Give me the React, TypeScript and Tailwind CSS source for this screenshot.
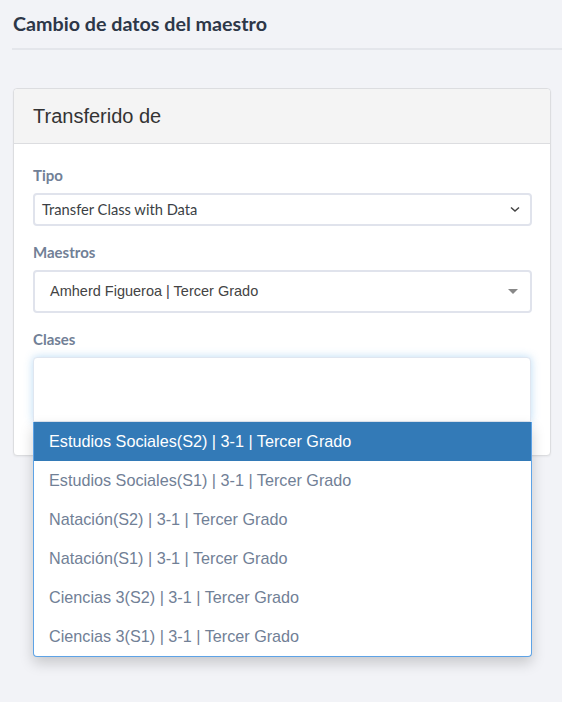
import React from "react";

const options = [
  "Estudios Sociales(S2) | 3-1 | Tercer Grado",
  "Estudios Sociales(S1) | 3-1 | Tercer Grado",
  "Natación(S2) | 3-1 | Tercer Grado",
  "Natación(S1) | 3-1 | Tercer Grado",
  "Ciencias 3(S2) | 3-1 | Tercer Grado",
  "Ciencias 3(S1) | 3-1 | Tercer Grado",
];

export default function App() {
  return (
    <div className="min-h-[702px] w-[562px] bg-[#f2f3f7] font-['Lato',sans-serif] overflow-hidden">
      <div className="pl-[13px] pt-[11px]">
        <h1 className="text-[19.7px] leading-[26px] font-bold text-[#2d3748]">Cambio de datos del maestro</h1>
      </div>
      <div className="ml-[12px] mt-[11px] h-[2px] bg-[#e4e6eb]" />
      <div className="mx-[13px] mt-[38px] w-[538px] rounded-[4px] border border-[#dcdde0] bg-white shadow-[0_1px_2px_rgba(0,0,0,0.05)]">
        <div className="h-[55px] rounded-t-[4px] border-b border-[#dcdde0] bg-[#f4f4f4] px-[19px] flex items-center">
          <span className="font-['Liberation_Sans',Arial,sans-serif] text-[20px] text-[#333]">Transferido de</span>
        </div>
        <div className="px-[19px] pt-[22px] pb-[33px]">
          <label className="block text-[15px] leading-[18px] font-bold text-[#718096]">Tipo</label>
          <div className="mt-[9px] h-[33px] w-[499px] rounded-[4px] border-2 border-[#e0e3ec] bg-white flex items-center pl-[7px] pr-[10px]">
            <span className="flex-1 text-[14.7px] text-[#3b3f45]">Transfer Class with Data</span>
            <svg width="10" height="7" viewBox="0 0 10 7" className="text-[#444]">
              <path d="M1 1.5 L5 5 L9 1.5" fill="none" stroke="currentColor" strokeWidth="1.5" />
            </svg>
          </div>
          <label className="mt-[17px] block text-[15px] leading-[18px] font-bold text-[#718096]">Maestros</label>
          <div className="mt-[9px] h-[43px] w-[499px] rounded-[4px] border-2 border-[#e0e3ec] bg-white flex items-center pl-[15px] pr-[12px]">
            <span className="flex-1 font-['Liberation_Sans',Arial,sans-serif] text-[14.5px] text-[#444]">Amherd Figueroa | Tercer Grado</span>
            <svg width="10" height="5" viewBox="0 0 10 5">
              <path d="M0 0 L10 0 L5 5 Z" fill="#888" />
            </svg>
          </div>
          <label className="mt-[17px] block text-[15px] leading-[18px] font-bold text-[#718096]">Clases</label>
          <div className="relative mt-[9px]">
            <div className="h-[65px] w-[498px] rounded-t-[4px] border border-[#dfe6f0] bg-white shadow-[0_0_8px_rgba(102,175,233,0.45)]" />
            <div className="absolute left-0 top-[65px] z-10 w-[499px] rounded-b-[4px] border border-t-0 border-[#5ea3e6] bg-white shadow-[0_6px_14px_rgba(0,0,0,0.18)] font-['Liberation_Sans',Arial,sans-serif] text-[16.2px]">
              {options.map((o, i) => (
                <div
                  key={o}
                  className={
                    i === 0
                      ? "h-[39px] flex items-center pl-[15px] bg-[#337ab7] text-white"
                      : "h-[39px] flex items-center pl-[15px] text-[#718096]"
                  }
                >
                  {o}
                </div>
              ))}
            </div>
          </div>
        </div>
      </div>
    </div>
  );
}
